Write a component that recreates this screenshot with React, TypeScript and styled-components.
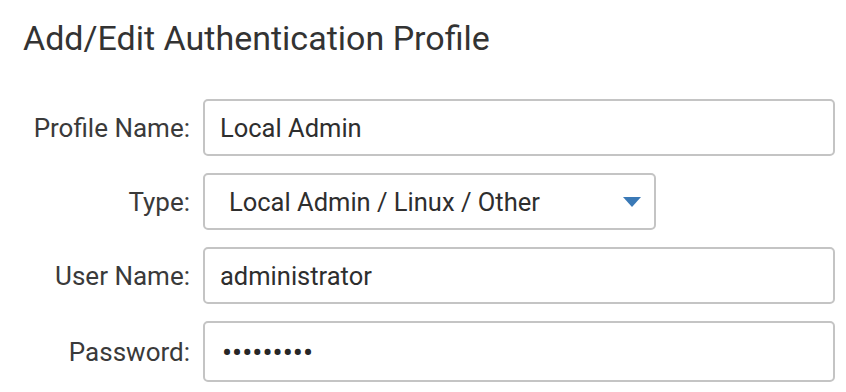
import styled, { createGlobalStyle } from 'styled-components';

const GlobalStyle = createGlobalStyle`
  body {
    margin: 0;
    background: #ffffff;
    font-family: Roboto, "Liberation Sans", sans-serif;
    color: #363636;
  }
`;

const FIELDS = [
  { label: 'Profile Name:', value: 'Local Admin' },
  { label: 'Type:', value: 'Local Admin / Linux / Other', select: true },
  { label: 'User Name:', value: 'administrator' },
  { label: 'Password:', value: '•••••••••', secret: true },
];

const App = () => {
  return (
    <>
      <GlobalStyle />
      <Page>
        <Title>Add/Edit Authentication Profile</Title>
        <Form>
          {FIELDS.map((f) => (
            <Row key={f.label}>
              <Label>{f.label}</Label>
              {f.select ? (
                <Select>
                  <SelectText>{f.value}</SelectText>
                  <Caret viewBox="0 0 18 10" aria-hidden>
                    <path d="M0 0 H18 L9 10 Z" fill="#3a79b6" />
                  </Caret>
                </Select>
              ) : (
                <Field $tall={f.secret}>
                  {f.secret ? <Dots>{f.value}</Dots> : f.value}
                </Field>
              )}
            </Row>
          ))}
        </Form>
      </Page>
    </>
  );
};

export default App;

const Page = styled.div`
  width: 846px;
  height: 392px;
  box-sizing: border-box;
  padding: 18px 0 0 0;
  overflow: hidden;
`;

const Title = styled.h1`
  margin: 0 0 41px 23px;
  font-size: 34px;
  line-height: 40px;
  font-weight: 400;
  color: #333333;
`;

const Form = styled.div`
  display: flex;
  flex-direction: column;
  gap: 17px;
`;

const Row = styled.div`
  display: grid;
  grid-template-columns: 190px auto;
  column-gap: 13px;
  align-items: center;
  justify-content: start;
`;

const Label = styled.span`
  text-align: right;
  font-size: 26px;
  color: #3a3a3a;
`;

const Field = styled.div<{ $tall?: boolean }>`
  box-sizing: border-box;
  width: 632px;
  height: ${({ $tall }) => ($tall ? '61px' : '57px')};
  border: 2px solid #c4c4c4;
  border-radius: 5px;
  padding: 0 15px;
  display: flex;
  align-items: center;
  font-size: 25.5px;
  color: #2e2e2e;
`;

const Dots = styled.span`
  font-size: 30px;
  line-height: 1;
  padding: 3px 0 0 2px;
  color: #262626;
`;

const Select = styled.div`
  box-sizing: border-box;
  width: 453px;
  height: 57px;
  border: 2px solid #c4c4c4;
  border-radius: 5px;
  padding: 0 13px 0 24px;
  display: flex;
  align-items: center;
  justify-content: space-between;
  font-size: 25.5px;
  color: #2e2e2e;
`;

const SelectText = styled.span``;

const Caret = styled.svg`
  width: 18px;
  height: 10px;
  flex: none;
`;
